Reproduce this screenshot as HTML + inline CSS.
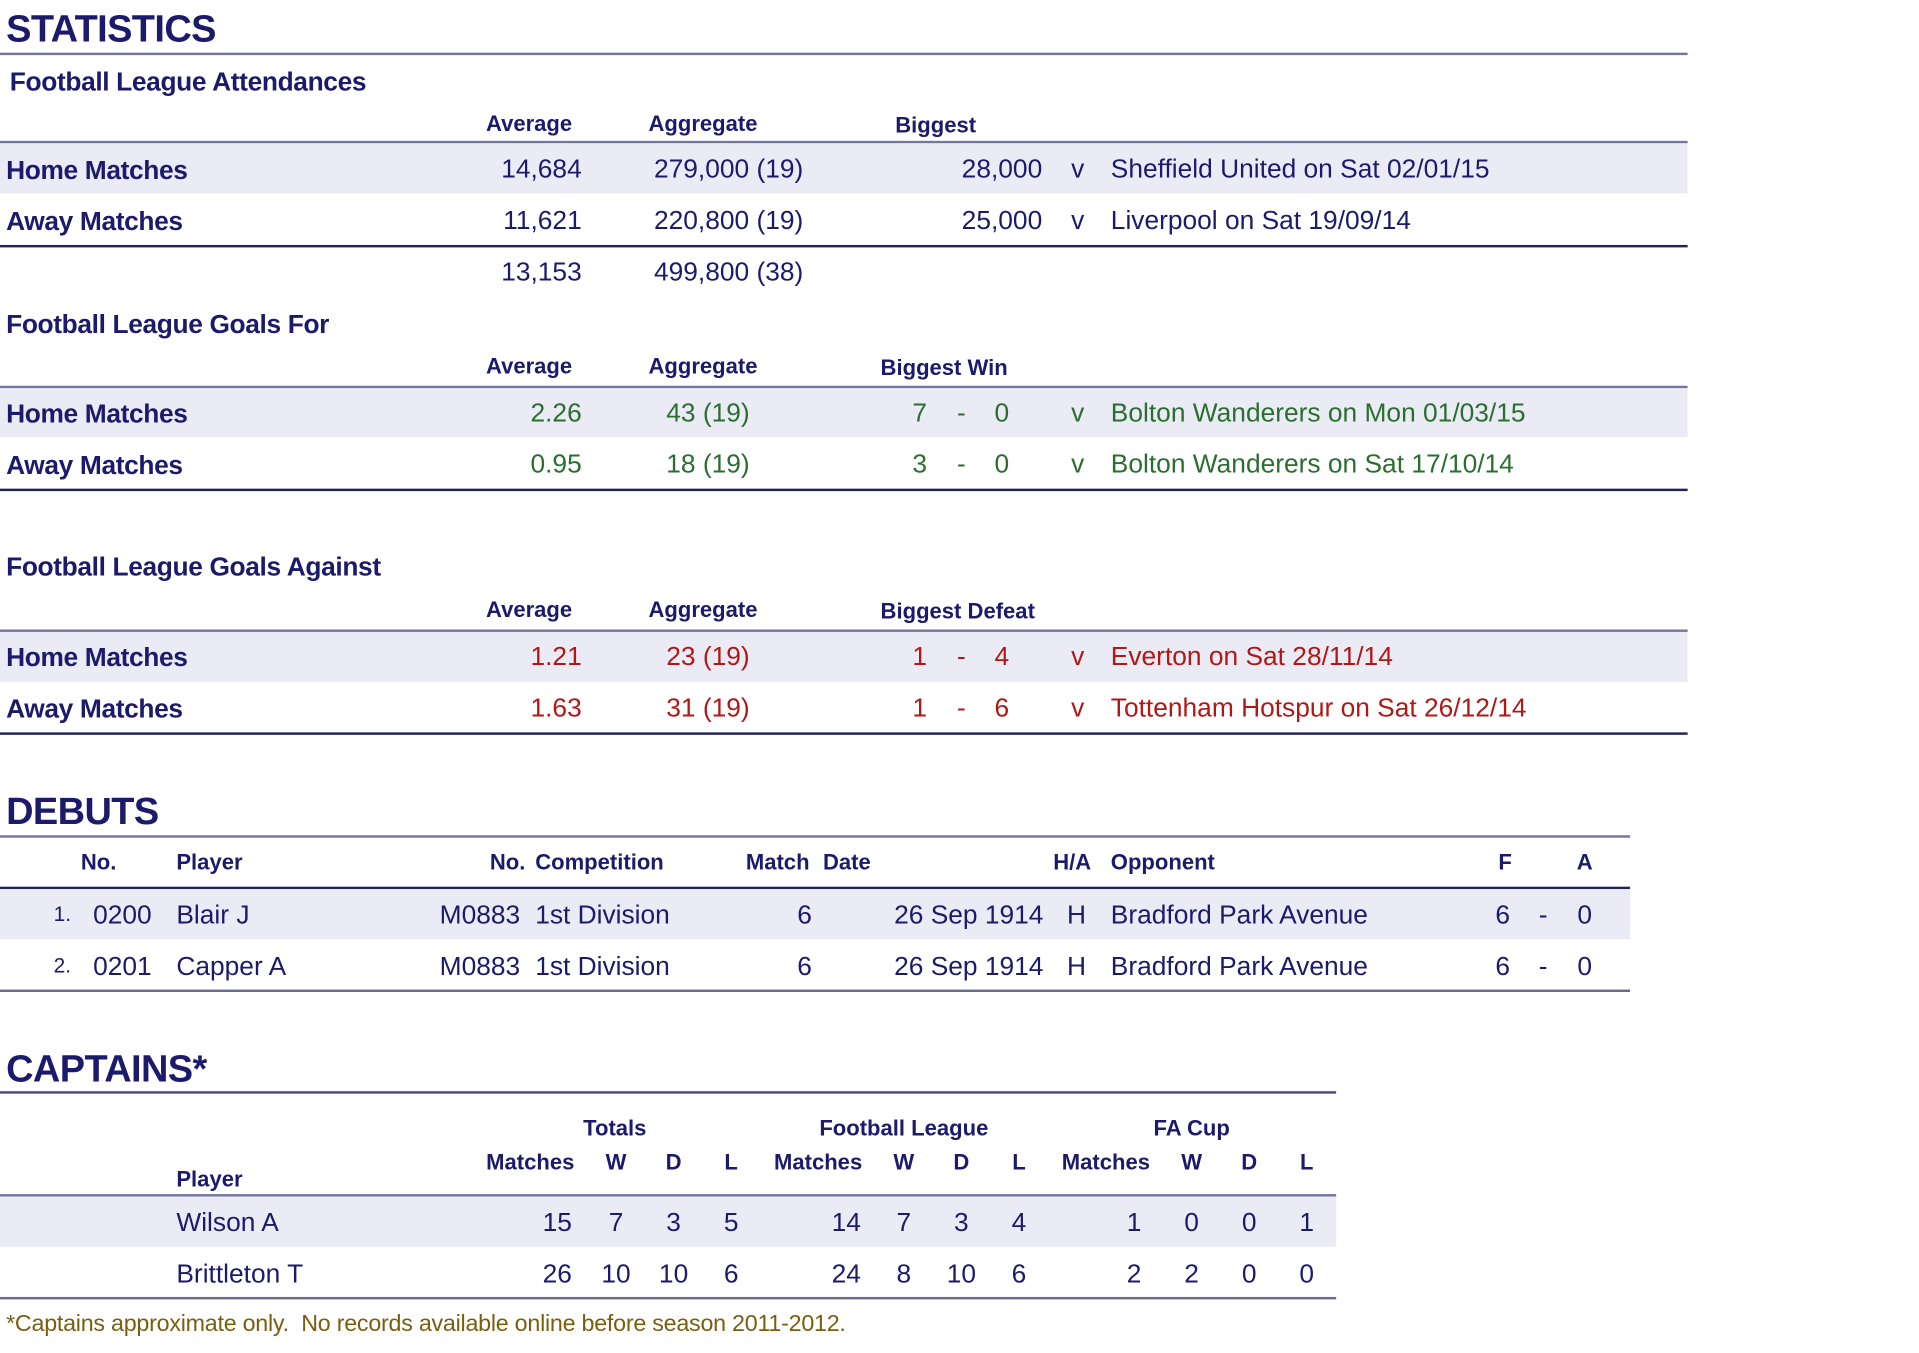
<!DOCTYPE html>
<html><head><meta charset="utf-8"><style>
html,body{margin:0;padding:0;background:#fff;width:1919px;height:1350px;overflow:hidden}
#w{position:absolute;left:0;top:0;width:1570px;height:1105px;transform:scale(1.2247);transform-origin:0 0;font-family:"Liberation Sans",sans-serif;color:#1b1a6b}
.t{position:absolute;height:24px;line-height:24px;white-space:nowrap;font-size:21.5px}
.r{transform:translateX(-100%)}
.c{transform:translateX(-50%)}
.b{font-weight:bold;font-size:21.5px;letter-spacing:-0.3px}
.h{font-weight:bold;font-size:18px}
.T{font-weight:bold;font-size:31px;height:34px;line-height:34px;letter-spacing:-0.5px}
.ln{position:absolute;left:0;height:2px;background:#7474a0}
.dk{background:#22225c;height:1.5px}
.sh{position:absolute;left:0;background:#ebebf6}
.g{color:#2a6e30}.rd{color:#b01818}
</style></head><body><div id="w">

<div class="t T" style="left:5px;top:7px">STATISTICS</div>
<div class="ln" style="top:43px;width:1378px"></div>
<div class="t b" style="left:8px;top:55px">Football League Attendances</div>
<div class="t h c" style="left:432px;top:89px">Average</div>
<div class="t h c" style="left:574px;top:89px">Aggregate</div>
<div class="t h" style="left:731px;top:90px">Biggest</div>
<div class="ln" style="top:115px;width:1378px"></div>
<div class="sh" style="top:117px;width:1378px;height:41px"></div>
<div class="t b" style="left:5px;top:127px">Home Matches</div>
<div class="t r" style="left:475px;top:126px">14,684</div>
<div class="t" style="left:534px;top:126px">279,000 (19)</div>
<div class="t r" style="left:851px;top:126px">28,000</div>
<div class="t c" style="left:880px;top:126px">v</div>
<div class="t" style="left:907px;top:126px">Sheffield United on Sat 02/01/15</div>
<div class="t b" style="left:5px;top:169px">Away Matches</div>
<div class="t r" style="left:475px;top:168px">11,621</div>
<div class="t" style="left:534px;top:168px">220,800 (19)</div>
<div class="t r" style="left:851px;top:168px">25,000</div>
<div class="t c" style="left:880px;top:168px">v</div>
<div class="t" style="left:907px;top:168px">Liverpool on Sat 19/09/14</div>
<div class="ln dk" style="top:200px;width:1378px"></div>
<div class="t r" style="left:475px;top:210px">13,153</div>
<div class="t" style="left:534px;top:210px">499,800 (38)</div>

<div class="t b" style="left:5px;top:253px">Football League Goals For</div>
<div class="t h c" style="left:432px;top:287px">Average</div>
<div class="t h c" style="left:574px;top:287px">Aggregate</div>
<div class="t h" style="left:719px;top:288px">Biggest Win</div>
<div class="ln" style="top:315px;width:1378px"></div>
<div class="sh" style="top:317px;width:1378px;height:40px"></div>
<div class="t b" style="left:5px;top:326px">Home Matches</div>
<div class="t r g" style="left:475px;top:325px">2.26</div>
<div class="t g" style="left:544px;top:325px">43 (19)</div>
<div class="t c g" style="left:751px;top:325px">7</div>
<div class="t c g" style="left:785px;top:325px">-</div>
<div class="t c g" style="left:818px;top:325px">0</div>
<div class="t c g" style="left:880px;top:325px">v</div>
<div class="t g" style="left:907px;top:325px">Bolton Wanderers on Mon 01/03/15</div>
<div class="t b" style="left:5px;top:368px">Away Matches</div>
<div class="t r g" style="left:475px;top:367px">0.95</div>
<div class="t g" style="left:544px;top:367px">18 (19)</div>
<div class="t c g" style="left:751px;top:367px">3</div>
<div class="t c g" style="left:785px;top:367px">-</div>
<div class="t c g" style="left:818px;top:367px">0</div>
<div class="t c g" style="left:880px;top:367px">v</div>
<div class="t g" style="left:907px;top:367px">Bolton Wanderers on Sat 17/10/14</div>
<div class="ln dk" style="top:399px;width:1378px"></div>

<div class="t b" style="left:5px;top:451px">Football League Goals Against</div>
<div class="t h c" style="left:432px;top:486px">Average</div>
<div class="t h c" style="left:574px;top:486px">Aggregate</div>
<div class="t h" style="left:719px;top:487px">Biggest Defeat</div>
<div class="ln" style="top:514px;width:1378px"></div>
<div class="sh" style="top:516px;width:1378px;height:41px"></div>
<div class="t b" style="left:5px;top:525px">Home Matches</div>
<div class="t r rd" style="left:475px;top:524px">1.21</div>
<div class="t rd" style="left:544px;top:524px">23 (19)</div>
<div class="t c rd" style="left:751px;top:524px">1</div>
<div class="t c rd" style="left:785px;top:524px">-</div>
<div class="t c rd" style="left:818px;top:524px">4</div>
<div class="t c rd" style="left:880px;top:524px">v</div>
<div class="t rd" style="left:907px;top:524px">Everton on Sat 28/11/14</div>
<div class="t b" style="left:5px;top:567px">Away Matches</div>
<div class="t r rd" style="left:475px;top:566px">1.63</div>
<div class="t rd" style="left:544px;top:566px">31 (19)</div>
<div class="t c rd" style="left:751px;top:566px">1</div>
<div class="t c rd" style="left:785px;top:566px">-</div>
<div class="t c rd" style="left:818px;top:566px">6</div>
<div class="t c rd" style="left:880px;top:566px">v</div>
<div class="t rd" style="left:907px;top:566px">Tottenham Hotspur on Sat 26/12/14</div>
<div class="ln dk" style="top:598px;width:1378px"></div>

<div class="t T" style="left:5px;top:646px">DEBUTS</div>
<div class="ln" style="top:682px;width:1331px"></div>
<div class="t h" style="left:66px;top:692px">No.</div>
<div class="t h" style="left:144px;top:692px">Player</div>
<div class="t h r" style="left:429px;top:692px">No.</div>
<div class="t h" style="left:437px;top:692px">Competition</div>
<div class="t h" style="left:609px;top:692px">Match</div>
<div class="t h" style="left:672px;top:692px">Date</div>
<div class="t h" style="left:860px;top:692px">H/A</div>
<div class="t h" style="left:907px;top:692px">Opponent</div>
<div class="t h c" style="left:1229px;top:692px">F</div>
<div class="t h c" style="left:1294px;top:692px">A</div>
<div class="ln dk" style="top:724px;width:1331px"></div>
<div class="sh" style="top:726px;width:1331px;height:41px"></div>
<div class="t r" style="left:58px;top:735px;font-size:17px">1.</div>
<div class="t" style="left:76px;top:735px">0200</div>
<div class="t" style="left:144px;top:735px">Blair J</div>
<div class="t" style="left:359px;top:735px">M0883</div>
<div class="t" style="left:437px;top:735px">1st Division</div>
<div class="t c" style="left:657px;top:735px">6</div>
<div class="t r" style="left:852px;top:735px">26 Sep 1914</div>
<div class="t c" style="left:879px;top:735px">H</div>
<div class="t" style="left:907px;top:735px">Bradford Park Avenue</div>
<div class="t c" style="left:1227px;top:735px">6</div>
<div class="t c" style="left:1260px;top:735px">-</div>
<div class="t c" style="left:1294px;top:735px">0</div>
<div class="t r" style="left:58px;top:777px;font-size:17px">2.</div>
<div class="t" style="left:76px;top:777px">0201</div>
<div class="t" style="left:144px;top:777px">Capper A</div>
<div class="t" style="left:359px;top:777px">M0883</div>
<div class="t" style="left:437px;top:777px">1st Division</div>
<div class="t c" style="left:657px;top:777px">6</div>
<div class="t r" style="left:852px;top:777px">26 Sep 1914</div>
<div class="t c" style="left:879px;top:777px">H</div>
<div class="t" style="left:907px;top:777px">Bradford Park Avenue</div>
<div class="t c" style="left:1227px;top:777px">6</div>
<div class="t c" style="left:1260px;top:777px">-</div>
<div class="t c" style="left:1294px;top:777px">0</div>
<div class="ln" style="top:808px;width:1331px;background:#6a6a90"></div>

<div class="t T" style="left:5px;top:856px">CAPTAINS*</div>
<div class="ln" style="top:891px;width:1091px;background:#4a4a80"></div>
<div class="t h c" style="left:502px;top:909px">Totals</div>
<div class="t h c" style="left:738px;top:909px">Football League</div>
<div class="t h c" style="left:973px;top:909px">FA Cup</div>
<div class="t h c" style="left:433px;top:937px">Matches</div>
<div class="t h c" style="left:503px;top:937px">W</div>
<div class="t h c" style="left:550px;top:937px">D</div>
<div class="t h c" style="left:597px;top:937px">L</div>
<div class="t h c" style="left:668px;top:937px">Matches</div>
<div class="t h c" style="left:738px;top:937px">W</div>
<div class="t h c" style="left:785px;top:937px">D</div>
<div class="t h c" style="left:832px;top:937px">L</div>
<div class="t h c" style="left:903px;top:937px">Matches</div>
<div class="t h c" style="left:973px;top:937px">W</div>
<div class="t h c" style="left:1020px;top:937px">D</div>
<div class="t h c" style="left:1067px;top:937px">L</div>
<div class="t h" style="left:144px;top:951px">Player</div>
<div class="ln" style="top:975px;width:1091px"></div>
<div class="sh" style="top:977px;width:1091px;height:41px"></div>
<div class="t" style="left:144px;top:986px">Wilson A</div>
<div class="t c" style="left:455px;top:986px">15</div>
<div class="t c" style="left:503px;top:986px">7</div>
<div class="t c" style="left:550px;top:986px">3</div>
<div class="t c" style="left:597px;top:986px">5</div>
<div class="t c" style="left:691px;top:986px">14</div>
<div class="t c" style="left:738px;top:986px">7</div>
<div class="t c" style="left:785px;top:986px">3</div>
<div class="t c" style="left:832px;top:986px">4</div>
<div class="t c" style="left:926px;top:986px">1</div>
<div class="t c" style="left:973px;top:986px">0</div>
<div class="t c" style="left:1020px;top:986px">0</div>
<div class="t c" style="left:1067px;top:986px">1</div>
<div class="t" style="left:144px;top:1028px">Brittleton T</div>
<div class="t c" style="left:455px;top:1028px">26</div>
<div class="t c" style="left:503px;top:1028px">10</div>
<div class="t c" style="left:550px;top:1028px">10</div>
<div class="t c" style="left:597px;top:1028px">6</div>
<div class="t c" style="left:691px;top:1028px">24</div>
<div class="t c" style="left:738px;top:1028px">8</div>
<div class="t c" style="left:785px;top:1028px">10</div>
<div class="t c" style="left:832px;top:1028px">6</div>
<div class="t c" style="left:926px;top:1028px">2</div>
<div class="t c" style="left:973px;top:1028px">2</div>
<div class="t c" style="left:1020px;top:1028px">0</div>
<div class="t c" style="left:1067px;top:1028px">0</div>
<div class="ln" style="top:1059px;width:1091px;background:#6a6a90"></div>
<div class="t" style="left:5px;top:1070px;font-size:19px;color:#7a5e10;letter-spacing:-0.2px">*Captains approximate only.&nbsp; No records available online before season 2011-2012.</div>

</div></body></html>
